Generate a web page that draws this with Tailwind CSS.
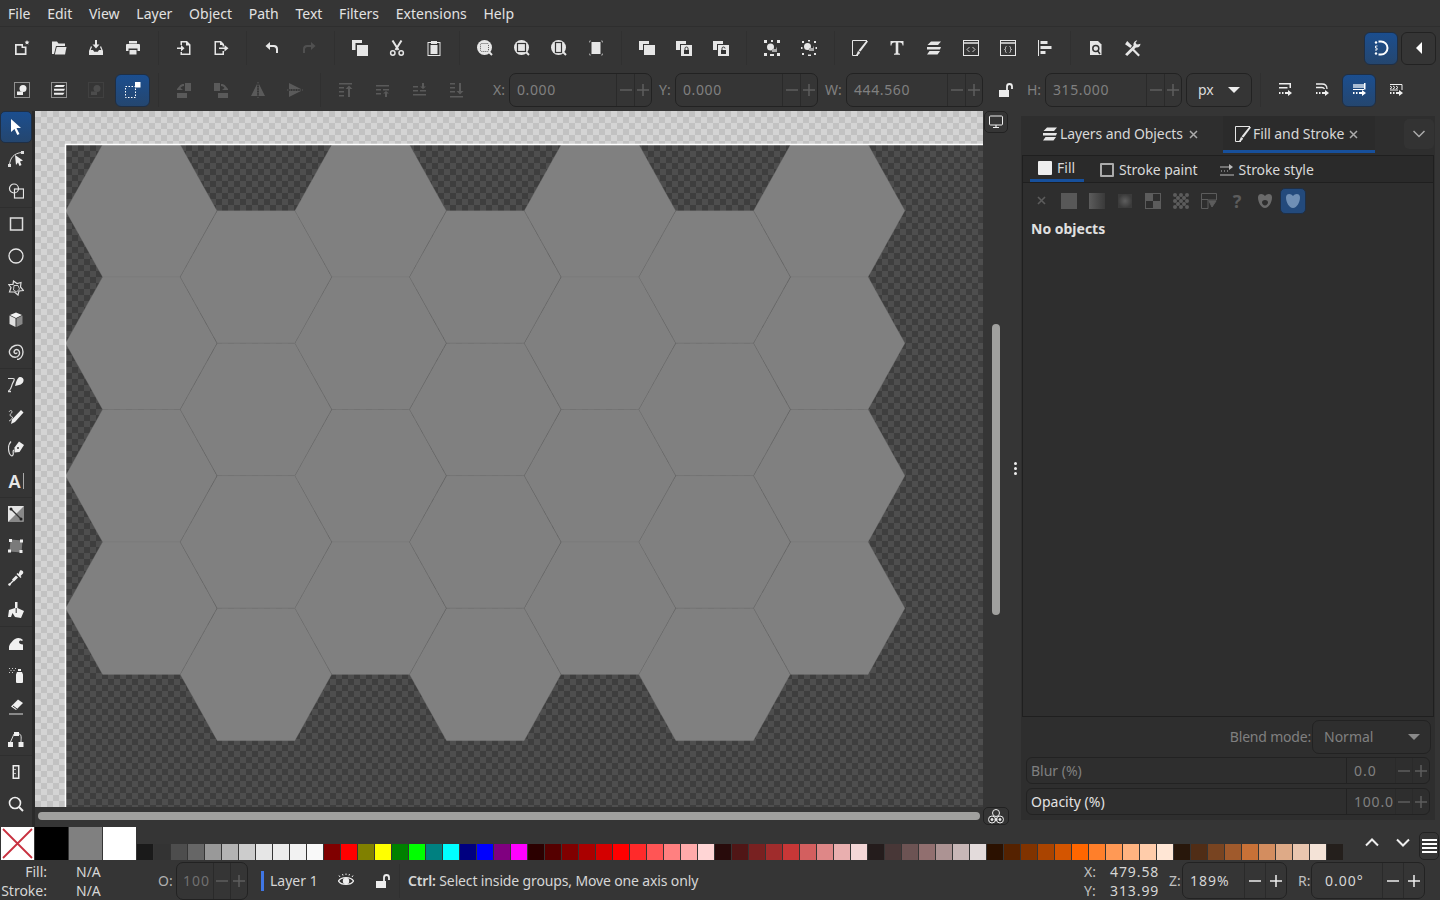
<!DOCTYPE html>
<html><head><meta charset="utf-8"><script src="https://cdn.jsdelivr.net/npm/@tailwindcss/browser@4"></script></head>
<body class="m-0">
<div class="w-[1440px] h-[900px] overflow-hidden flex flex-col bg-[#353535] text-[#e2e2e2] text-[14px] leading-[18px] font-['Noto_Sans',sans-serif]">
<!-- menu -->
<div class="h-[27px] shrink-0 flex items-center gap-[16.750px] px-[8px] border-b border-[#2e2e2e] pt-[1px]">
<span>File</span><span>Edit</span><span>View</span><span>Layer</span><span>Object</span><span>Path</span><span>Text</span><span>Filters</span><span>Extensions</span><span>Help</span>
</div>
<!-- command bar -->
<div class="h-[42px] shrink-0 flex items-center pl-[3px] text-[#e6e6e6]">
<div class="w-[37px] flex justify-center"><svg class="w-4 h-4 fill-current" viewBox="0 0 16 16"><path fill-rule="evenodd" d="M1 4h8v2.500h3.500V15H1zM2.700 5.700v7.600h8.100V8H7.500V5.700z"/><path d="M13 0l.7 1.600 1.800.1-1.400 1.200.5 1.700-1.600-.9-1.500.9.4-1.700-1.300-1.200 1.700-.1z"/></svg></div>
<div class="w-[37px] flex justify-center"><svg class="w-4 h-4 fill-current" viewBox="0 0 16 16"><path d="M1 1.500h5l1.500 2H14V6H5L3 14H1z"/><path d="M5.700 7H15.500L14 14.500H3.800z"/></svg></div>
<div class="w-[37px] flex justify-center"><svg class="w-4 h-4 fill-current" viewBox="0 0 16 16"><path d="M7 0h2v4.500h2.500L8 8.500 4.500 4.500H7z"/><path d="M3 6l1 1-1.300 3H5l1.200 1.800h3.600L11 10h2.300L12 7l1-1 2 5v4H1v-4z"/></svg></div>
<div class="w-[37px] flex justify-center"><svg class="w-4 h-4 fill-current" viewBox="0 0 16 16"><path d="M4 1h8v2.500H4z"/><path d="M1 5a1 1 0 0 1 1-1h12a1 1 0 0 1 1 1v6h-2.500V8.500h-9V11H1z"/><path d="M4.500 10h7v4.500h-7z"/></svg></div>
<div class="w-[14px] h-[34px] flex justify-center"><div class="w-px h-full bg-[#303030]"></div></div>
<div class="w-[37px] flex justify-center"><svg class="w-4 h-4 fill-current" viewBox="0 0 16 16"><path d="M4.500 1H11l3.500 3.500V15h-10v-3H6v1.500h7V5.500h-3v-3H6V5H4.500z"/><path d="M1 7.500h4V5l3.500 3.300L5 11.500V9H1z"/></svg></div>
<div class="w-[37px] flex justify-center"><svg class="w-4 h-4 fill-current" viewBox="0 0 16 16"><path d="M1.500 1H8l3 3v2.500H9.500V5H7V2.500H3v11h6.500V11H11v4H1.500z"/><path d="M6 7.500h5.500V5l4 3.300-4 3.200V9H6z"/></svg></div>
<div class="w-[14px] h-[34px] flex justify-center"><div class="w-px h-full bg-[#303030]"></div></div>
<div class="w-[37px] flex justify-center"><svg class="w-4 h-4 fill-current" viewBox="0 0 16 16"><path d="M1.500 6L6 2v3h4c2.500 0 4 1.500 4 4v4h-2V9.500C12 8 11 7 9.500 7H6v3z"/></svg></div>
<div class="w-[37px] flex justify-center"><svg class="w-4 h-4 fill-[#505050]" viewBox="0 0 16 16"><path d="M14.500 6L10 2v3H6C3.500 5 2 6.500 2 9v4h2V9.500C4 8 5 7 6.500 7H10v3z"/></svg></div>
<div class="w-[14px] h-[34px] flex justify-center"><div class="w-px h-full bg-[#303030]"></div></div>
<div class="w-[37px] flex justify-center"><svg class="w-4 h-4 fill-current" viewBox="0 0 16 16"><path d="M0 0h10v3H3.500v7H0z"/><path d="M5 5h11v11H5z"/></svg></div>
<div class="w-[37px] flex justify-center"><svg class="w-4 h-4 fill-none stroke-current" viewBox="0 0 16 16"><path stroke-width="2" d="M3.500 0.500L9.500 10M12.500 0.500L6.500 10"/><circle cx="3.800" cy="13" r="2.200" stroke-width="1.500"/><circle cx="12.200" cy="13" r="2.200" stroke-width="1.500"/></svg></div>
<div class="w-[37px] flex justify-center"><svg class="w-4 h-4 fill-current" viewBox="0 0 16 16"><path fill-rule="evenodd" d="M1.500 2H5V1h6v1h3.500v14h-13zM2.500 3v12h11V3H11v1H5V3z"/><path d="M4.500 5h7v9h-7z"/></svg></div>
<div class="w-[14px] h-[34px] flex justify-center"><div class="w-px h-full bg-[#303030]"></div></div>
<div class="w-[37px] flex justify-center"><svg class="w-4 h-4" viewBox="0 0 16 16"><path d="M12 12l3 3" stroke="#e6e6e6" stroke-width="2"/><circle cx="7.500" cy="7.500" r="7.500" fill="#e6e6e6"/><rect x="3.500" y="3.500" width="8" height="8" rx="1" fill="none" stroke="#555" stroke-dasharray="1 1"/></svg></div>
<div class="w-[37px] flex justify-center"><svg class="w-4 h-4" viewBox="0 0 16 16"><path d="M12 12l3 3" stroke="#e6e6e6" stroke-width="2"/><circle cx="7.500" cy="7.500" r="7.500" fill="#e6e6e6"/><rect x="3.500" y="3.500" width="8" height="8" fill="none" stroke="#333" stroke-width="1.200"/></svg></div>
<div class="w-[37px] flex justify-center"><svg class="w-4 h-4" viewBox="0 0 16 16"><path d="M12 12l3 3" stroke="#e6e6e6" stroke-width="2"/><circle cx="7.500" cy="7.500" r="7.500" fill="#e6e6e6"/><rect x="4.500" y="2.500" width="6" height="10" fill="none" stroke="#333" stroke-width="1.200"/></svg></div>
<div class="w-[37px] flex justify-center"><svg class="w-4 h-4" viewBox="0 0 16 16"><rect x="3.500" y="2" width="9" height="12" fill="#e6e6e6"/><path d="M1.500 2.500V1h1.500M13 1h1.500v1.500M14.500 13.500V15H13M3 15H1.500v-1.500" fill="none" stroke="#999" stroke-width="1"/></svg></div>
<div class="w-[14px] h-[34px] flex justify-center"><div class="w-px h-full bg-[#303030]"></div></div>
<div class="w-[37px] flex justify-center"><svg class="w-4 h-4 fill-current" viewBox="0 0 16 16"><path d="M0 1h10v3H4v6H0z"/><path d="M5 5h11v10H5z"/></svg></div>
<div class="w-[37px] flex justify-center"><svg class="w-4 h-4" viewBox="0 0 16 16"><path fill="#e6e6e6" d="M0 1h10v3H4v6H0z"/><path fill="#e6e6e6" d="M5 5h11v11H5z"/><path fill="#333" d="M8 10h5v4H8z"/><path fill="none" stroke="#333" d="M9 10V8.500a1.500 1.500 0 0 1 3 0V10"/></svg></div>
<div class="w-[37px] flex justify-center"><svg class="w-4 h-4" viewBox="0 0 16 16"><path fill="#e6e6e6" d="M0 1h10v3H4v6H0z"/><path fill="#e6e6e6" d="M5 5h11v11H5z"/><path fill="#333" d="M8 10h5v4H8z"/><path fill="none" stroke="#333" d="M9 10V8.500a1.500 1.500 0 0 1 3 0"/></svg></div>
<div class="w-[14px] h-[34px] flex justify-center"><div class="w-px h-full bg-[#303030]"></div></div>
<div class="w-[37px] flex justify-center"><svg class="w-4 h-4 fill-current" viewBox="0 0 16 16"><path d="M0 0h3v3H0zM13 0h3v3h-3zM0 13h3v3H0zM13 13h3v3h-3zM7 0h2v2H7zM6 14h4v2H6z"/><circle cx="6.500" cy="7" r="3.500"/><path d="M8 9h4V6.500L13 9v3H8z" fill="#aaa"/></svg></div>
<div class="w-[37px] flex justify-center"><svg class="w-4 h-4 fill-current" viewBox="0 0 16 16"><path d="M1 1h2v2H1zM13 1h2v2h-2zM1 13h2v2H1zM13 13h2v2h-2zM7 0h2v1.500H7zM7 14.500h3V16H7zM0 7h1.500v2H0zM14.500 7H16v2h-1.500z"/><circle cx="6.500" cy="6.500" r="3.500"/><path d="M8 8h4V5.500L13 8v3H8z" fill="#aaa"/></svg></div>
<div class="w-[14px] h-[34px] flex justify-center"><div class="w-px h-full bg-[#303030]"></div></div>
<div class="w-[37px] flex justify-center"><svg class="w-4 h-4" viewBox="0 0 16 16"><path d="M0.500 15.500V0.500H15M0.500 15.500H6" fill="none" stroke="#e6e6e6"/><path fill="#e6e6e6" d="M14.500 0.500L16 1.500 8.500 11.500 6.500 10.500zM6 11l2 1c0 2-2 3.500-4.500 3.500C5 14.500 5 12.500 6 11z"/></svg></div>
<div class="w-[37px] flex justify-center"><svg class="w-4 h-4 fill-current" viewBox="0 0 16 16"><path d="M1.500 1h13v4.500h-1C13.500 3.500 12.500 2.500 10.500 2.500H9.300v10.700l1.700.6v1H5v-1l1.700-.6V2.500H5.500C3.500 2.500 2.500 3.500 2.500 5.500h-1z"/></svg></div>
<div class="w-[37px] flex justify-center"><svg class="w-4 h-4 fill-current" viewBox="0 0 16 16"><path d="M5 1.500h10L12 5H1.500zM1 7h14l-1 2.500H1zM3.500 11H14l-2.500 3.500H1z"/></svg></div>
<div class="w-[37px] flex justify-center"><svg class="w-4 h-4" viewBox="0 0 16 16"><rect x=".5" y=".5" width="15" height="15" fill="none" stroke="#e6e6e6"/><path d="M1 3h14" stroke="#e6e6e6" stroke-width="1.500"/><path d="M6.500 7L4 9.500l2.500 2.500M9.500 7L12 9.500 9.500 12" fill="none" stroke="#ccc"/></svg></div>
<div class="w-[37px] flex justify-center"><svg class="w-4 h-4" viewBox="0 0 16 16"><rect x=".5" y=".5" width="15" height="15" fill="none" stroke="#e6e6e6"/><path d="M1 3h14" stroke="#e6e6e6" stroke-width="1.500"/><path d="M6.500 6.500c-1 0-1 .5-1 1.500s0 1.500-1 1.500c1 0 1 .5 1 1.500s0 1.500 1 1.500M9.500 6.500c1 0 1 .5 1 1.500s0 1.500 1 1.500c-1 0-1 .5-1 1.500s0 1.500-1 1.500" fill="none" stroke="#ccc"/></svg></div>
<div class="w-[37px] flex justify-center"><svg class="w-4 h-4 fill-current" viewBox="0 0 16 16"><path d="M1 0h1v16H1zM3.500 1h7v3h-7zM3.500 6h11v3h-11zM3.500 11h5v3h-5z"/></svg></div>
<div class="w-[14px] h-[34px] flex justify-center"><div class="w-px h-full bg-[#303030]"></div></div>
<div class="w-[37px] flex justify-center"><svg class="w-4 h-4" viewBox="0 0 16 16"><path fill="#e6e6e6" d="M2 1h8l3.500 3.500V15H2z"/><circle cx="7.800" cy="8.500" r="3" fill="none" stroke="#333" stroke-width="1.500"/><path d="M9.500 10.500L12 14" stroke="#333" stroke-width="1.500"/></svg></div>
<div class="w-[37px] flex justify-center"><svg class="w-[17px] h-[17px] fill-current" viewBox="0 0 16 16"><path d="M1 4l2-3 4.500 4.500-1.500 2zM9 8l6 6-1.500 1.500-6-6zM15.500 3.500c0 2.500-2 4-4.300 3.500L3 15 1 13.500 9 5.300C8.500 3 10 .5 12.500.5L10.800 2.600l1.300 1.700 1.800-.2z"/></svg></div>
<div class="flex-1"></div>
<div class="w-[34px] h-[33px] rounded-[6px] border border-[#1f2f45] bg-gradient-to-b from-[#1b4e8f] to-[#24466f] flex items-center justify-center"><svg class="w-4 h-4" viewBox="0 0 16 16"><path d="M6 1.500h2.500a6.500 6.500 0 0 1 0 13H6" transform="translate(-.5 0)" fill="none" stroke="#fff" stroke-width="2"/><circle cx="3" cy="2.500" r="1.200" fill="#fff"/><circle cx="3" cy="13.500" r="1.200" fill="#fff"/><path d="M4.500 6H2.500v2h1.500v2H2" fill="none" stroke="#fff" stroke-width=".9"/></svg></div>
<div class="w-[35px] h-[33px] ml-[3px] mr-[4px] rounded-[6px] border border-[#222] flex items-center justify-center"><svg class="w-2 h-[12px] fill-white" viewBox="0 0 8 12"><path d="M7 0v12L1 6z"/></svg></div>
</div>
<!-- control bar -->
<div class="h-[42px] shrink-0 flex items-center pl-[3px] text-[#808080]">
<div class="w-[37px] flex justify-center"><svg class="w-4 h-4" viewBox="0 0 16 16"><rect x=".5" y=".5" width="15" height="15" fill="none" stroke="#eee" stroke-dasharray="1 1"/><circle cx="9" cy="6.500" r="3.500" fill="#eee"/><path d="M3 9.500h6V13H3z" fill="#eee"/></svg></div>
<div class="w-[37px] flex justify-center"><svg class="w-4 h-4 fill-[#eee]" viewBox="0 0 16 16"><rect x=".5" y=".5" width="15" height="15" fill="none" stroke="#eee" stroke-dasharray="1 1"/><path d="M5 3h9l-1.500 2H3zM3 6.800h11l-1 2H3zM3 10.800h10.500l-1.500 2H3z"/></svg></div>
<div class="w-[37px] flex justify-center"><svg class="w-4 h-4" viewBox="0 0 16 16"><rect x=".5" y=".5" width="15" height="15" fill="none" stroke="#4c4c4c" stroke-dasharray="1 1"/><circle cx="9" cy="6.500" r="3.500" fill="#4c4c4c"/><path d="M3 9.500h6V13H3z" fill="#4c4c4c"/></svg></div>
<div class="w-[37px] flex justify-center"><div class="w-[35px] h-[33px] rounded-[6px] border border-[#1f2f45] bg-gradient-to-b from-[#1b4e8f] to-[#24466f] flex items-center justify-center"><svg class="w-4 h-4" viewBox="0 0 16 16"><rect x=".5" y="4.500" width="10" height="11" fill="none" stroke="#fff" stroke-dasharray="1.500 1.500"/><rect x="10" y="0" width="5.500" height="5.500" fill="#fff"/></svg></div></div>
<div class="w-[14px] h-[34px] flex justify-center"><div class="w-px h-full bg-[#303030]"></div></div>
<div class="w-[37px] flex justify-center"><svg class="w-4 h-4 fill-[#5a5a5a]" viewBox="0 0 16 16"><path d="M9 1h6v8H9zM1 11h10v5H1z"/><path d="M1 7l2.500-3C4.500 2.500 6 2 8 2v2C6 4 5 5 4.500 6L7 8H1z"/></svg></div>
<div class="w-[37px] flex justify-center"><svg class="w-4 h-4 fill-[#5a5a5a]" viewBox="0 0 16 16"><path d="M1 1h6v8H1zM5 11h10v5H5z"/><path d="M15 7l-2.500-3C11.500 2.500 10 2 8 2v2c2 0 3 1 3.500 2L9 8h6z"/></svg></div>
<div class="w-[37px] flex justify-center"><svg class="w-4 h-4 fill-[#5a5a5a]" viewBox="0 0 16 16"><path d="M7 2v12H1zM9 2l6 12H9z"/><path d="M8 0v16" stroke="#5a5a5a" stroke-dasharray="1.500 1"/></svg></div>
<div class="w-[37px] flex justify-center"><svg class="w-4 h-4 fill-[#5a5a5a]" viewBox="0 0 16 16"><path d="M2 1l12 6H2zM2 9h12L2 15z"/><path d="M0 8h16" stroke="#5a5a5a" stroke-dasharray="1.500 1"/></svg></div>
<div class="w-[14px] h-[34px] flex justify-center"><div class="w-px h-full bg-[#303030]"></div></div>
<div class="w-[37px] flex justify-center"><svg class="w-4 h-4 fill-[#5a5a5a]" viewBox="0 0 16 16"><path d="M1 1h13v1.500H1zM1 5h5v1.500H1zM1 9h5v1.500H1zM1 13h5v1.500H1zM10 15V7H7.500L11 3.500 14.500 7H12v8z"/></svg></div>
<div class="w-[37px] flex justify-center"><svg class="w-4 h-4 fill-[#5a5a5a]" viewBox="0 0 16 16"><path d="M1 3h13v1.500H1zM1 7h5v1.500H1zM8 7h6v1.500H8zM1 11h5v1.500H1zM10 15v-3.500H8L11 9l3 2.500h-2V15z"/></svg></div>
<div class="w-[37px] flex justify-center"><svg class="w-4 h-4 fill-[#5a5a5a]" viewBox="0 0 16 16"><path d="M1 12h13v1.500H1zM1 8h5v1.500H1zM8 8h6v1.500H8zM1 4h5v1.500H1zM10 1v3.500H8L11 7l3-2.500h-2V1z"/></svg></div>
<div class="w-[37px] flex justify-center"><svg class="w-4 h-4 fill-[#5a5a5a]" viewBox="0 0 16 16"><path d="M1 14h13v1.500H1zM1 9h5v1.500H1zM1 5h5v1.500H1zM1 1h5v1.500H1zM10 1v8H7.500l3.500 3.500L14.500 9H12V1z"/></svg></div>
<span class="ml-[18px] w-[16px]">X:</span>
<div class="h-[34px] w-[143px] rounded-[7px] border border-[#222] flex items-center"><span class="flex-1 pl-[7px] tracking-[.6px]">0.000</span><div class="w-[18px] h-full border-l border-[#2a2a2a] flex items-center justify-center"><svg class="w-3 h-3" viewBox="0 0 12 12"><path d="M0 6h12" stroke="#5e5e5e" stroke-width="1.500"/></svg></div><div class="w-[17px] h-full border-l border-[#2a2a2a] flex items-center justify-center"><svg class="w-3 h-3" viewBox="0 0 12 12"><path d="M0 6h12M6 0v12" stroke="#5e5e5e" stroke-width="1.500"/></svg></div></div>
<span class="ml-[7px] w-[16px]">Y:</span>
<div class="h-[34px] w-[143px] rounded-[7px] border border-[#222] flex items-center"><span class="flex-1 pl-[7px] tracking-[.6px]">0.000</span><div class="w-[18px] h-full border-l border-[#2a2a2a] flex items-center justify-center"><svg class="w-3 h-3" viewBox="0 0 12 12"><path d="M0 6h12" stroke="#5e5e5e" stroke-width="1.500"/></svg></div><div class="w-[17px] h-full border-l border-[#2a2a2a] flex items-center justify-center"><svg class="w-3 h-3" viewBox="0 0 12 12"><path d="M0 6h12M6 0v12" stroke="#5e5e5e" stroke-width="1.500"/></svg></div></div>
<span class="ml-[7px] w-[21px]">W:</span>
<div class="h-[34px] w-[137px] rounded-[7px] border border-[#222] flex items-center"><span class="flex-1 pl-[7px] tracking-[.6px]">444.560</span><div class="w-[18px] h-full border-l border-[#2a2a2a] flex items-center justify-center"><svg class="w-3 h-3" viewBox="0 0 12 12"><path d="M0 6h12" stroke="#5e5e5e" stroke-width="1.500"/></svg></div><div class="w-[17px] h-full border-l border-[#2a2a2a] flex items-center justify-center"><svg class="w-3 h-3" viewBox="0 0 12 12"><path d="M0 6h12M6 0v12" stroke="#5e5e5e" stroke-width="1.500"/></svg></div></div>
<div class="w-[45px] flex justify-center"><svg class="w-4 h-4" viewBox="0 0 16 16"><path fill="#eee" d="M1 8h10v7H1z"/><path fill="none" stroke="#eee" stroke-width="1.800" d="M9 8V4.500a2.500 2.500 0 0 1 5 0V7"/></svg></div>
<span class="w-[18px] -ml-[1px]">H:</span>
<div class="h-[34px] w-[137px] rounded-[7px] border border-[#222] flex items-center"><span class="flex-1 pl-[7px] tracking-[.6px]">315.000</span><div class="w-[18px] h-full border-l border-[#2a2a2a] flex items-center justify-center"><svg class="w-3 h-3" viewBox="0 0 12 12"><path d="M0 6h12" stroke="#5e5e5e" stroke-width="1.500"/></svg></div><div class="w-[17px] h-full border-l border-[#2a2a2a] flex items-center justify-center"><svg class="w-3 h-3" viewBox="0 0 12 12"><path d="M0 6h12M6 0v12" stroke="#5e5e5e" stroke-width="1.500"/></svg></div></div>
<div class="ml-[4px] h-[34px] w-[66px] rounded-[7px] border border-[#222] flex items-center justify-between px-[11px] text-[#dcdcdc]"><span>px</span><svg class="w-[12px] h-[6px] fill-[#eee]" viewBox="0 0 12 6"><path d="M0 0h12L6 6z"/></svg></div>
<div class="ml-[8px] w-px h-[34px] bg-[#303030]"></div>
<div class="w-[5px]"></div>
<div class="w-[37px] flex justify-center"><svg class="w-4 h-4 fill-[#eee]" viewBox="0 0 16 16"><path d="M2 1h12v5h-1.500V2.500H2zM2 5h8.500v1.500H2zM2 10h1.500v2H2zM5 10h1.500v2H5zM8 10h3V8l4 3-4 3v-2H8z"/></svg></div>
<div class="w-[37px] flex justify-center"><svg class="w-4 h-4" viewBox="0 0 16 16"><path fill="none" stroke="#eee" stroke-width="1.300" d="M2 2h6c3 0 5 2 5 5M2 5.500h6c1 0 2 .5 2.500 1.500"/><path fill="#eee" d="M2 10h1.500v2H2zM5 10h1.500v2H5zM8 10h3V8l4 3-4 3v-2H8z"/></svg></div>
<div class="w-[37px] flex justify-center"><div class="w-[34px] h-[33px] rounded-[6px] border border-[#1f2f45] bg-gradient-to-b from-[#1b4e8f] to-[#24466f] flex items-center justify-center"><svg class="w-4 h-4" viewBox="0 0 16 16"><path fill="#a9bcd3" d="M2 2h11v4H2z"/><path fill="#fff" d="M13 1h1.500v6.500H13zM2 7h11v1H2zM2 10h1.500v2H2zM5 10h1.500v2H5zM8 10h3V8l4 3-4 3v-2H8z"/></svg></div></div>
<div class="w-[37px] flex justify-center"><svg class="w-4 h-4" viewBox="0 0 16 16"><path fill="none" stroke="#eee" d="M2 4l2 1.500L2 7M5 4l2 1.500L5 7M8 4l2 1.500L8 7M2 2.500h12V8M2 8h8"/><path fill="#eee" d="M2 10h1.500v2H2zM5 10h1.500v2H5zM8 10h3V8l4 3-4 3v-2H8z"/></svg></div>
</div>
<!-- main -->
<div class="h-[716px] shrink-0 flex">
<!-- tools -->
<div class="w-[35px] shrink-0 border-r-[3px] border-r-[#2a2a2a] flex flex-col text-[#e6e6e6]">
<div class="w-full h-[32px] bg-gradient-to-b from-[#1b4e8f] to-[#24466f] rounded-[5px] border border-[#1f2f45] flex items-center justify-center"><svg class="w-4 h-4 fill-white" viewBox="0 0 16 16"><path d="M3 0l10 9H8.500l3 6-2.200 1-2.800-6L3 13z"/></svg></div>
<div class="h-[32px] flex items-center justify-center"><svg class="w-4 h-4" viewBox="0 0 16 16"><path d="M1.500 14C2 7 6 2 14 1.500" fill="none" stroke="#ddd"/><rect x="0" y="13" width="3" height="3" fill="#ddd"/><rect x="13" y="0" width="3" height="3" fill="#ddd"/><path fill="#eee" d="M7 4l8 5.500-3 1 1.500 3.500-2 1L10 11.500 8 14z"/></svg></div>
<div class="h-[32px] flex items-center justify-center"><svg class="w-4 h-4 fill-none stroke-[#e6e6e6]" viewBox="0 0 16 16"><circle cx="6" cy="5.500" r="4.500" stroke-width="1.200"/><rect x="6.500" y="6" width="9" height="9" stroke-width="1.200"/></svg></div>
<div class="h-px bg-[#2e2e2e]"></div>
<div class="h-[32px] flex items-center justify-center"><svg class="w-4 h-4 -ml-px fill-none stroke-[#ddd]" viewBox="0 0 16 16"><rect x="2.500" y="2" width="12" height="12" stroke-width="1.500"/></svg></div>
<div class="h-[32px] flex items-center justify-center"><svg class="w-4 h-4 fill-none stroke-[#e6e6e6]" viewBox="0 0 16 16"><circle cx="8" cy="8" r="7" stroke-width="1.300"/></svg></div>
<div class="h-[32px] flex items-center justify-center"><svg class="w-4 h-4 fill-none stroke-[#ddd]" viewBox="0 0 16 16"><path stroke-width="1.200" d="M5.500 1L9 3.500l4-1-.5 4.500L15.500 10.500l-4.500.5-1 4-3.500-3L1.500 12 3 7.500 0.700 4.500 5 4.500z"/><path stroke-width=".9" d="M6 5.500h4l1.500 3.500-3 3-3-2z"/></svg></div>
<div class="h-[32px] flex items-center justify-center"><svg class="w-4 h-4" viewBox="0 0 16 16"><path fill="#f2f2f2" d="M8 0.500L2 3l6 3 6-3z"/><path fill="#e0e0e0" d="M1.500 3.500l6 3V15L1.500 12z"/><path fill="#888" d="M8.500 6.500l6-3V12L8.500 15z"/></svg></div>
<div class="h-[32px] flex items-center justify-center"><svg class="w-4 h-4 fill-none stroke-[#ddd]" viewBox="0 0 16 16"><path stroke-width="1.400" d="M9 8.500c0 1-1.500 1.500-2.500.5S6.500 5.500 8.500 5.500 12.500 8 11 11 5 14 2.500 11 2 3 7 1.500 15 3 15 8s-3.500 7.500-6 7.500"/></svg></div>
<div class="h-px bg-[#2e2e2e]"></div>
<div class="h-[32px] flex items-center justify-center"><svg class="w-4 h-4" viewBox="0 0 16 16"><path d="M0 1.500h5c2.500 0 .5 3-.5 5-1.500 3-.5 5-4 7.500" fill="none" stroke="#ddd" stroke-width="1.200"/><path fill="#eee" d="M12 0c2.500 0 4 2 3.500 4s-2 3.500-4.500 4L7 9c.5-1 .5-3 1.500-5S10.500 0 12 0z"/><path d="M0 14.500h3" stroke="#ddd" stroke-width="1.500"/></svg></div>
<div class="h-[32px] flex items-center justify-center"><svg class="w-4 h-4" viewBox="0 0 16 16"><path d="M1 3c1-2 3-2 3 0 0 1.500-2 1.500-2 3s2 1 2.500 2S2 12 1 12" fill="none" stroke="#ccc"/><path fill="#f0f0f0" d="M13 1l2.500 2.500L7 13l-4 2 1-4.500z"/></svg></div>
<div class="h-[32px] flex items-center justify-center"><svg class="w-4 h-4" viewBox="0 0 16 16"><path d="M3 0.500C0.500 3 0 7 1 11c.5 3 3 5 4 3s-1-4 1-5" fill="none" stroke="#ddd" stroke-width="1.200"/><path fill="#eee" d="M11 0.500l5 3.500-4.500 7-5 .5 0-5z"/><circle cx="10" cy="7" r="1" fill="#333"/></svg></div>
<div class="h-[32px] flex items-center justify-center gap-[2px]"><span class="font-semibold text-[18px] text-[#e8e8e8]">A</span><span class="w-px h-4 bg-[#aaa]"></span></div>
<div class="h-px bg-[#2e2e2e]"></div>
<div class="h-[32px] flex items-center justify-center"><svg class="w-4 h-4" viewBox="0 0 16 16"><rect width="16" height="16" rx="1" fill="#888"/><path fill="#eee" d="M0 0h16L0 16z" opacity=".9"/><path d="M2.500 2.500l11 11" stroke="#333" stroke-width="1.300"/><circle cx="3" cy="3" r="1.500" fill="#222"/><circle cx="13" cy="13" r="1.500" fill="#222"/></svg></div>
<div class="h-[32px] flex items-center justify-center"><svg class="w-4 h-4" viewBox="0 0 16 16"><path fill="#7a7a7a" d="M2.500 1.500l12 1-1 12-12-1z"/><path d="M1 1h3v3H1zM12 1.500h3v3h-3zM11.500 12h3v3h-3zM0 11.500h3v3H0z" fill="#eee"/></svg></div>
<div class="h-[32px] flex items-center justify-center"><svg class="w-4 h-4" viewBox="0 0 16 16"><path d="M6 10L1 15" stroke="#eee" stroke-width="1.200"/><circle cx="1.500" cy="14.500" r="1.200" fill="#eee"/><path fill="#eee" d="M12 .5c2-1 4 1 3 3L12.500 6l1 1-1 1-4-4 1-1 1 1zM8 5.500l2 2L6 11.500l-2-2z"/></svg></div>
<div class="h-[32px] flex items-center justify-center"><svg class="w-4 h-4" viewBox="0 0 16 16"><path fill="#f0f0f0" d="M7 0h2.500v6L16 9l-3 7-6-1-2.500-4-1.500 4H0l1-7 6-2z"/><path d="M8.200 6v5" stroke="#333" stroke-width="1"/></svg></div>
<div class="h-px bg-[#2e2e2e]"></div>
<div class="h-[32px] flex items-center justify-center"><svg class="w-4 h-4 fill-[#f0f0f0]" viewBox="0 0 16 16"><path d="M1 15v-3c0-2 3-6 6-8 3-2 6-1 8 1l-1 1c-1-1-3-.5-3 1s1.500 2.500 4 2.500V15z"/></svg></div>
<div class="h-[32px] flex items-center justify-center"><svg class="w-4 h-4" viewBox="0 0 16 16"><path fill="#f0f0f0" d="M9 5h5l1 2.500V15a1 1 0 0 1-1 1H9a1 1 0 0 1-1-1V7.500zM10 2h3v2h-3z"/><path d="M1 1h1v1H1zM4 1h1v1H4zM2.500 3h1v1h-1zM5.500 3h1v1h-1zM1 5h1v1H1zM4 5h1v1H4zM7 1h1v1H7z" fill="#ccc"/></svg></div>
<div class="h-[32px] flex items-center justify-center"><svg class="w-4 h-4" viewBox="0 0 16 16"><path fill="#f0f0f0" d="M10 0.500L15 4 8 11l-5-3.500z"/><path d="M1 15h14" stroke="#ddd" stroke-width="1"/><path d="M5 7l4 3" stroke="#333"/></svg></div>
<div class="h-[32px] flex items-center justify-center"><svg class="w-4 h-4" viewBox="0 0 16 16"><path d="M6 1h5v4H6zM0 11h5v5H0zM10.500 11h5v5h-5z" fill="#f0f0f0"/><path d="M6 3L2.500 11M11 3c3 0 2 5 2 8" fill="none" stroke="#ddd"/></svg></div>
<div class="h-px bg-[#2e2e2e]"></div>
<div class="h-[32px] flex items-center justify-center"><svg class="w-4 h-4" viewBox="0 0 16 16"><path fill="#eee" d="M4.500 1h7v14h-7z"/><path d="M6 2.500h4v11H6z" fill="#444"/><path d="M6 5h2v1H6zM6 9h2v1H6z" fill="#bbb"/></svg></div>
<div class="h-[32px] flex items-center justify-center"><svg class="w-4 h-4 fill-none stroke-[#eee]" viewBox="0 0 16 16"><circle cx="7" cy="7" r="5.500" stroke-width="1.600"/><path stroke-width="2" d="M11 11l4 4"/></svg></div>
</div>
<!-- canvas block -->
<div class="w-[974px] shrink-0 flex flex-col">
<div class="h-[696px] flex">
<svg class="w-[948px] h-[696px] block shrink-0" viewBox="0 0 948 696">
<defs>
<pattern id="lt" width="12" height="12" patternUnits="userSpaceOnUse"><rect width="12" height="12" fill="#c2c2c2"/><rect width="6" height="6" fill="#d4d4d4"/><rect x="6" y="6" width="6" height="6" fill="#d4d4d4"/></pattern>
<pattern id="dk" width="12" height="12" patternUnits="userSpaceOnUse" x="31" y="34"><rect width="12" height="12" fill="#4e4e4e"/><rect width="6" height="6" fill="#3e3e3e"/><rect x="6" y="6" width="6" height="6" fill="#3e3e3e"/></pattern>
<polygon id="h" points="0,0 37,-66.250 114.500,-66.250 151.300,0 114.500,66.250 37,66.250" fill="#808080" stroke="#747474" stroke-width=".3"/>
</defs>
<rect width="948" height="696" fill="url(#lt)"/>
<rect x="31" y="34" width="917" height="662" fill="url(#dk)"/>
<g transform="translate(-.4 -.3)">
<use href="#h" x="31" y="100"/><use href="#h" x="31" y="232.500"/><use href="#h" x="31" y="365"/><use href="#h" x="31" y="497.500"/>
<use href="#h" x="260.300" y="100"/><use href="#h" x="260.300" y="232.500"/><use href="#h" x="260.300" y="365"/><use href="#h" x="260.300" y="497.500"/>
<use href="#h" x="489.700" y="100"/><use href="#h" x="489.700" y="232.500"/><use href="#h" x="489.700" y="365"/><use href="#h" x="489.700" y="497.500"/>
<use href="#h" x="719" y="100"/><use href="#h" x="719" y="232.500"/><use href="#h" x="719" y="365"/><use href="#h" x="719" y="497.500"/>
<use href="#h" x="145.700" y="166.250"/><use href="#h" x="145.700" y="298.750"/><use href="#h" x="145.700" y="431.250"/><use href="#h" x="145.700" y="563.750"/>
<use href="#h" x="375" y="166.250"/><use href="#h" x="375" y="298.750"/><use href="#h" x="375" y="431.250"/><use href="#h" x="375" y="563.750"/>
<use href="#h" x="604.300" y="166.250"/><use href="#h" x="604.300" y="298.750"/><use href="#h" x="604.300" y="431.250"/><use href="#h" x="604.300" y="563.750"/>
</g>
<path d="M948 33.500H30.500V696" fill="none" stroke="#fff" stroke-width="1.500"/>
</svg>
<div class="w-[26px] flex flex-col items-center">
<div class="w-[24px] h-[22px] rounded-[5px] border border-[#222] flex items-center justify-center"><svg class="w-[14px] h-[14px]" viewBox="0 0 14 14"><rect x=".5" y="1" width="13" height="9" rx="1" fill="none" stroke="#eee"/><path d="M4 12.500h6M7 10v2" stroke="#eee" stroke-width="1.200"/></svg></div>
<div class="mt-[191px] w-[8px] h-[291px] rounded-full bg-[#a0a09e]"></div>
</div>
</div>
<div class="h-[20px] flex">
<div class="w-[948px] pl-[3px] pr-[3px] pt-[5px]"><div class="h-[8px] rounded-full bg-[#a0a09e]"></div></div>
<div class="w-[26px] h-[18px] rounded-[5px] border border-[#222] flex items-center justify-center"><svg class="w-4 h-4 fill-none stroke-[#eee]" viewBox="0 0 16 16"><circle cx="8" cy="5" r="3.500"/><circle cx="4" cy="11.500" r="3.500"/><circle cx="12" cy="11.500" r="3.500"/><circle cx="4" cy="11.500" r="1" fill="#eee"/><circle cx="8" cy="11.500" r="1" fill="#eee"/><circle cx="12" cy="11.500" r="1" fill="#eee"/></svg></div>
</div>
</div>
<!-- handle -->
<div class="w-[12px] shrink-0 flex flex-col items-center justify-center gap-[2px] pb-[2px]"><i class="block w-[3px] h-[3px] rounded-full bg-[#eee]"></i><i class="block w-[3px] h-[3px] rounded-full bg-[#eee]"></i><i class="block w-[3px] h-[3px] rounded-full bg-[#eee]"></i></div>
<!-- panel -->
<div class="w-[414px] shrink-0 mt-[5px] h-[704px] bg-[#2e2e2e] flex flex-col">
<div class="h-[37px] flex shrink-0 items-stretch pl-[2px] text-[#d8d8d8]">
<div class="w-[200px] flex items-center pl-[19px] gap-[2px] border-b-[3px] border-transparent pt-[2px]"><svg class="w-4 h-4 fill-[#e6e6e6]" viewBox="0 0 16 16"><path d="M5 1.500h10L12 5H1.500zM1 7h14l-1 2.500H1zM3.500 11H14l-2.500 3.500H1z"/></svg><span class="tracking-[-.1px]">Layers and Objects</span><svg class="ml-[4px] w-[9px] h-[9px]" viewBox="0 0 9 9"><path d="M1 1l7 7M8 1L1 8" stroke="#aaa" stroke-width="1.500"/></svg></div>
<div class="w-[152px] border-b-[3px] border-[#17509c] bg-[#2b2b2b] flex items-center pl-[12px] gap-[2px] pt-[2px]"><svg class="w-4 h-4" viewBox="0 0 16 16"><path d="M0.500 15.500V0.500H15M0.500 15.500H6" fill="none" stroke="#e6e6e6"/><path fill="#e6e6e6" d="M14.500 0.500L16 1.500 8.500 11.500 6.500 10.500zM6 11l2 1c0 2-2 3.500-4.500 3.500C5 14.500 5 12.500 6 11z"/></svg><span class="tracking-[-.08px]">Fill and Stroke</span><svg class="ml-[3px] w-[9px] h-[9px]" viewBox="0 0 9 9"><path d="M1 1l7 7M8 1L1 8" stroke="#aaa" stroke-width="1.500"/></svg></div>
<div class="flex-1"></div>
<div class="w-[30px] h-[30px] mt-[3px] mr-[1px] rounded-[5px] bg-[#333] flex items-center justify-center"><svg class="w-[12px] h-[8px]" viewBox="0 0 12 8"><path d="M.5 1L6 6.500 11.500 1" fill="none" stroke="#aaa" stroke-width="1.500"/></svg></div>
</div>
<div class="h-[2px] shrink-0"></div>
<div class="h-[562px] shrink-0 mx-[1px] border border-[#1f1f1f] flex flex-col">
<div class="h-[27px] shrink-0 bg-[#2a2a2a] border-b border-[#1f1f1f] flex pl-[7px] text-[#d8d8d8]">
<div class="w-[54px] border-b-[3px] border-[#17509c] flex items-center pl-[8px] gap-[5px] pt-[1px]"><span class="block w-[14px] h-[14px] bg-[#eee] rounded-[1px]"></span><span>Fill</span></div>
<div class="ml-[16px] flex items-center gap-[5px] pt-[1px]"><span class="block w-[14px] h-[14px] border-2 border-[#aaa] rounded-[1px]"></span><span class="tracking-[-.08px]">Stroke paint</span></div>
<div class="ml-[22px] flex items-center gap-[5px] pt-[1px]"><svg class="w-[14px] h-[14px]" viewBox="0 0 14 14"><path d="M0 4h9M0 12h14M1 8h1M4 8h1M7 8h1" stroke="#bbb" stroke-width="1.200"/><path d="M9 1l4 3-4 3z" fill="#bbb"/></svg><span class="tracking-[-.08px]">Stroke style</span></div>
</div>
<div class="flex items-center h-[31px] mt-[2px] pl-[4px]">
<div class="w-[28px] flex justify-center"><svg class="w-[9px] h-[9px]" viewBox="0 0 9 9"><path d="M1 1l7 7M8 1L1 8" stroke="#5c5c5c" stroke-width="1.600"/></svg></div>
<div class="w-[28px] flex justify-center"><div class="w-4 h-4 bg-[#585858]"></div></div>
<div class="w-[28px] flex justify-center"><div class="w-4 h-4 bg-gradient-to-r from-[#5c5c5c] to-[#3a3a3a]"></div></div>
<div class="w-[28px] flex justify-center"><div class="w-[14px] h-[14px] bg-[radial-gradient(circle,#5e5e5e,#3b3b3b_70%)]"></div></div>
<div class="w-[28px] flex justify-center"><svg class="w-4 h-4" viewBox="0 0 16 16"><rect x=".5" y=".5" width="15" height="15" fill="none" stroke="#5c5c5c"/><path d="M8 0H0v8h8zM8 8h8v8H8z" fill="#5c5c5c"/></svg></div>
<div class="w-[28px] flex justify-center"><svg class="w-4 h-4 fill-[#5c5c5c]" viewBox="0 0 16 16"><circle cx="2" cy="2" r="2"/><circle cx="8" cy="2" r="2"/><circle cx="14" cy="2" r="2"/><circle cx="5" cy="5" r="2"/><circle cx="11" cy="5" r="2"/><circle cx="2" cy="8" r="2"/><circle cx="8" cy="8" r="2"/><circle cx="14" cy="8" r="2"/><circle cx="5" cy="11" r="2"/><circle cx="11" cy="11" r="2"/><circle cx="2" cy="14" r="2"/><circle cx="8" cy="14" r="2"/><circle cx="14" cy="14" r="2"/></svg></div>
<div class="w-[28px] flex justify-center"><svg class="w-4 h-4 fill-none stroke-[#5c5c5c]" viewBox="0 0 16 16"><path d="M.5 15.500V.5h15V7H7v8.500z"/><path d="M1 6.500h6M8 8h7l-4 6z" fill="#5c5c5c"/></svg></div>
<div class="w-[28px] flex justify-center text-[18px] font-bold text-[#5c5c5c]">?</div>
<div class="w-[28px] flex justify-center"><svg class="w-4 h-4 fill-[#6a6a6a]" viewBox="0 0 16 16"><path fill-rule="evenodd" d="M8 3C6 0 1 0 1 4.500 1 9 4 15 8 15s7-6 7-10.500C15 0 10 0 8 3zM8 7c-2 0-3 1-3 2.500S6.500 12.500 8 12.500s3-1.500 3-3S10 7 8 7z"/></svg></div>
<div class="ml-px w-[26px] h-[26px] rounded-[5px] border border-[#1f2f45] bg-[#234a7c] flex items-center justify-center"><svg class="w-4 h-4 fill-[#6f8fb5]" viewBox="0 0 16 16"><path d="M8 3C6 0 1 0 1 4.500 1 9 4 15 8 15s7-6 7-10.500C15 0 10 0 8 3z"/></svg></div>
</div>
<div class="pl-[8px] mt-[4px] font-bold text-[#e0e0e0]">No objects</div>
</div>
<div class="flex-1 flex flex-col text-[#808080] pl-[5px] pr-[5px]">
<div class="flex items-center justify-end mt-[3px] mr-[-1px] h-[34px] gap-[1px]"><span class="tracking-[-.2px]">Blend mode:</span><div class="w-[119px] h-[34px] rounded-[7px] border border-[#222] flex items-center justify-between pl-[11px] pr-[10px]"><span>Normal</span><svg class="w-[12px] h-[6px] fill-[#8a8a8a]" viewBox="0 0 12 6"><path d="M0 0h12L6 6z"/></svg></div></div>
<div class="mt-[3px] h-[27px] rounded-[6px] border border-[#222] flex items-center w-[404px]"><span class="flex-1 pl-[4px]">Blur (%)</span><div class="w-[49px] h-full border-l border-[#222] flex items-center pl-[7px] tracking-[1px]">0.0</div><div class="w-[17px] h-full border-l border-[#2a2a2a] flex items-center justify-center"><svg class="w-3 h-3" viewBox="0 0 12 12"><path d="M0 6h12" stroke="#5e5e5e" stroke-width="1.500"/></svg></div><div class="w-[17px] h-full border-l border-[#2a2a2a] flex items-center justify-center"><svg class="w-3 h-3" viewBox="0 0 12 12"><path d="M0 6h12M6 0v12" stroke="#5e5e5e" stroke-width="1.500"/></svg></div></div>
<div class="mt-[4px] h-[27px] rounded-[6px] border border-[#222] flex items-center w-[404px]"><span class="flex-1 pl-[4px] text-[#e2e2e2]">Opacity (%)</span><div class="w-[49px] h-full border-l border-[#222] flex items-center pl-[7px] tracking-[.8px]">100.0</div><div class="w-[17px] h-full border-l border-[#2a2a2a] flex items-center justify-center"><svg class="w-3 h-3" viewBox="0 0 12 12"><path d="M0 6h12" stroke="#5e5e5e" stroke-width="1.500"/></svg></div><div class="w-[17px] h-full border-l border-[#2a2a2a] flex items-center justify-center"><svg class="w-3 h-3" viewBox="0 0 12 12"><path d="M0 6h12M6 0v12" stroke="#5e5e5e" stroke-width="1.500"/></svg></div></div>
</div>
</div>
</div>
<!-- palette -->
<div class="h-[34px] shrink-0 flex items-end pl-[1px] pb-px">
<div class="w-[33px] h-[33px] bg-white shrink-0 mr-[1px]"><svg class="w-full h-full" viewBox="0 0 33 33"><path d="M2 2l29 29M31 2L2 31" stroke="#c8303f" stroke-width="1.800"/></svg></div>
<div class="w-[33px] h-[33px] bg-black shrink-0 mr-[1px]"></div>
<div class="w-[33px] h-[33px] bg-[#808080] shrink-0 mr-[1px]"></div>
<div class="w-[33px] h-[33px] bg-white shrink-0 mr-[1px]"></div>
<div class="flex gap-px h-[16px] [&>i]:block [&>i]:w-[16px] [&>i]:h-[16px]">
<i class="bg-[#1a1a1a]"></i><i class="bg-[#333333]"></i><i class="bg-[#4d4d4d]"></i><i class="bg-[#666666]"></i><i class="bg-[#999999]"></i><i class="bg-[#b3b3b3]"></i><i class="bg-[#cccccc]"></i><i class="bg-[#e6e6e6]"></i><i class="bg-[#ececec]"></i><i class="bg-[#f2f2f2]"></i><i class="bg-[#f9f9f9]"></i>
<i class="bg-[#800000]"></i><i class="bg-[#ff0000]"></i><i class="bg-[#808000]"></i><i class="bg-[#ffff00]"></i><i class="bg-[#008000]"></i><i class="bg-[#00ff00]"></i><i class="bg-[#008080]"></i><i class="bg-[#00ffff]"></i><i class="bg-[#000080]"></i><i class="bg-[#0000ff]"></i><i class="bg-[#800080]"></i><i class="bg-[#ff00ff]"></i>
<i class="bg-[#2b0000]"></i><i class="bg-[#550000]"></i><i class="bg-[#800000]"></i><i class="bg-[#aa0000]"></i><i class="bg-[#d40000]"></i><i class="bg-[#ff0000]"></i><i class="bg-[#ff2a2a]"></i><i class="bg-[#ff5555]"></i><i class="bg-[#ff8080]"></i><i class="bg-[#ffaaaa]"></i><i class="bg-[#ffd5d5]"></i>
<i class="bg-[#280b0b]"></i><i class="bg-[#501616]"></i><i class="bg-[#782121]"></i><i class="bg-[#a02c2c]"></i><i class="bg-[#c83737]"></i><i class="bg-[#d35f5f]"></i><i class="bg-[#de8787]"></i><i class="bg-[#e9afaf]"></i><i class="bg-[#f4d7d7]"></i>
<i class="bg-[#241c1c]"></i><i class="bg-[#483737]"></i><i class="bg-[#6c5353]"></i><i class="bg-[#916f6f]"></i><i class="bg-[#ac9393]"></i><i class="bg-[#c8b7b7]"></i><i class="bg-[#e3dbdb]"></i>
<i class="bg-[#2b1100]"></i><i class="bg-[#552200]"></i><i class="bg-[#803300]"></i><i class="bg-[#aa4400]"></i><i class="bg-[#d45500]"></i><i class="bg-[#ff6600]"></i><i class="bg-[#ff7f2a]"></i><i class="bg-[#ff9955]"></i><i class="bg-[#ffb380]"></i><i class="bg-[#ffccaa]"></i><i class="bg-[#ffe6d5]"></i>
<i class="bg-[#28170b]"></i><i class="bg-[#502d16]"></i><i class="bg-[#784421]"></i><i class="bg-[#a05a2c]"></i><i class="bg-[#c87137]"></i><i class="bg-[#d38d5f]"></i><i class="bg-[#deaa87]"></i><i class="bg-[#e9c6af]"></i><i class="bg-[#f4e3d7]"></i>
<i class="bg-[#241f1c]"></i>
</div>
<div class="flex-1"></div>
<div class="w-[31px] h-[27px] self-center flex items-center justify-center mt-[-2px]"><svg class="w-[14px] h-[9px]" viewBox="0 0 14 9"><path d="M1 7.500L7 1.500l6 6" fill="none" stroke="#eee" stroke-width="2"/></svg></div>
<div class="w-[31px] h-[27px] self-center flex items-center justify-center mt-[-2px]"><svg class="w-[14px] h-[9px]" viewBox="0 0 14 9"><path d="M1 1.500L7 7.500l6-6" fill="none" stroke="#eee" stroke-width="2"/></svg></div>
<div class="w-[20px] h-[28px] mr-[1px] ml-[1px] rounded-[5px] border border-[#222] flex flex-col items-center justify-center gap-[2px]"><i class="block w-[15px] h-[2px] bg-white"></i><i class="block w-[15px] h-[2px] bg-white"></i><i class="block w-[15px] h-[2px] bg-white"></i><i class="block w-[15px] h-[2px] bg-white"></i></div>
</div>
<!-- status -->
<div class="h-[39px] shrink-0 flex items-center text-[#d6d6d6]">
<div class="w-[47px] flex flex-col items-end leading-[19px]"><span>Fill:</span><span>Stroke:</span></div>
<div class="ml-[29px] w-[82px] flex flex-col leading-[19px]"><span>N/A</span><span>N/A</span></div>
<span class="text-[#b0b0b0] w-[18px]">O:</span>
<div class="h-[38px] w-[72px] rounded-[7px] border border-[#222] flex items-center text-[#707070]"><span class="flex-1 pl-[6px] tracking-[1px]">100</span><div class="w-[17px] h-full border-l border-[#2a2a2a] flex items-center justify-center"><svg class="w-3 h-3" viewBox="0 0 12 12"><path d="M0 6h12" stroke="#5e5e5e" stroke-width="1.500"/></svg></div><div class="w-[17px] h-full border-l border-[#2a2a2a] flex items-center justify-center"><svg class="w-3 h-3" viewBox="0 0 12 12"><path d="M0 6h12M6 0v12" stroke="#5e5e5e" stroke-width="1.500"/></svg></div></div>
<div class="ml-[13px] w-[3px] h-[20px] bg-[#3f76e4]"></div>
<span class="ml-[6px] w-[58px]">Layer 1</span>
<div class="w-[37px] flex justify-center -ml-[1px]"><svg class="w-4 h-4" viewBox="0 0 16 16"><path d="M0.500 8C3 3.500 13 3.500 15.500 8 13 12.500 3 12.500 0.500 8z" fill="none" stroke="#eee" stroke-width="1.300"/><circle cx="8" cy="8" r="3.200" fill="#eee"/><path d="M2 4L1 2.500M5 2.500L4.500 1M8 2V.5M11 2.500l.5-1.500M14 4l1-1.500" stroke="#eee"/></svg></div>
<div class="w-[37px] flex justify-center"><svg class="w-4 h-4" viewBox="0 0 16 16"><path fill="#eee" d="M1 8h10v7H1z"/><path fill="none" stroke="#eee" stroke-width="1.800" d="M9 8V4.500a2.500 2.500 0 0 1 5 0V7"/></svg></div>
<div class="w-px h-[34px] bg-[#303030] ml-[-2px]"></div>
<span class="ml-[8px] tracking-[-.14px]"><b class="font-semibold">Ctrl:</b> Select inside groups, Move one axis only</span>
<div class="flex-1"></div>
<div class="flex flex-col leading-[19px] w-[26px]"><span class="text-[#c0c0c0]">X:</span><span class="text-[#c0c0c0]">Y:</span></div>
<div class="flex flex-col leading-[19px] w-[59px] tracking-[.9px]"><span>479.58</span><span>313.99</span></div>
<span class="w-[13px] text-[#c0c0c0]">Z:</span>
<div class="h-[37px] w-[105px] rounded-[7px] border border-[#222] flex items-center"><span class="flex-1 pl-[7px] tracking-[1px]">189%</span><div class="w-[21px] h-full border-l border-[#2a2a2a] flex items-center justify-center"><svg class="w-3 h-3" viewBox="0 0 12 12"><path d="M0 6h12" stroke="#eee" stroke-width="1.500"/></svg></div><div class="w-[21px] h-full border-l border-[#2a2a2a] flex items-center justify-center"><svg class="w-3 h-3" viewBox="0 0 12 12"><path d="M0 6h12M6 0v12" stroke="#eee" stroke-width="1.500"/></svg></div></div>
<span class="ml-[11px] w-[13px] text-[#c0c0c0]">R:</span>
<div class="h-[37px] w-[114px] rounded-[7px] border border-[#222] flex items-center mr-[15px]"><span class="flex-1 pl-[13px] tracking-[1px]">0.00°</span><div class="w-[21px] h-full border-l border-[#2a2a2a] flex items-center justify-center"><svg class="w-3 h-3" viewBox="0 0 12 12"><path d="M0 6h12" stroke="#eee" stroke-width="1.500"/></svg></div><div class="w-[21px] h-full border-l border-[#2a2a2a] flex items-center justify-center"><svg class="w-3 h-3" viewBox="0 0 12 12"><path d="M0 6h12M6 0v12" stroke="#eee" stroke-width="1.500"/></svg></div></div>
</div>
</div>
</body></html>
